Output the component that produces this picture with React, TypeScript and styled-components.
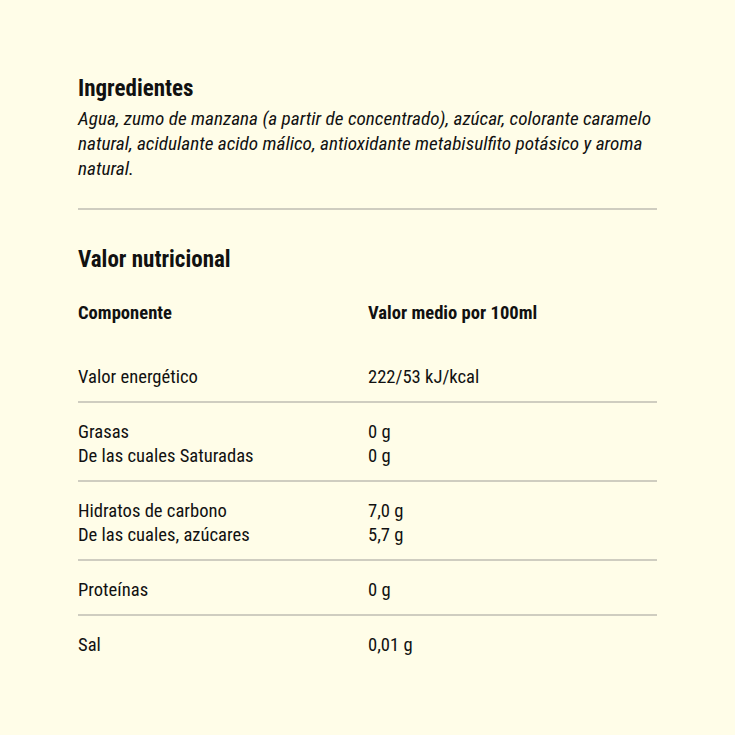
import React from 'react';
import styled, { createGlobalStyle } from 'styled-components';

const GlobalStyle = createGlobalStyle`
  html, body {
    margin: 0;
    padding: 0;
    background: #fffde8;
  }
  body {
    font-family: 'Roboto', 'Open Sans', sans-serif;
    font-stretch: 75%;
    color: #111;
  }
`;

const Page = styled.div`
  width: 735px;
  height: 735px;
  box-sizing: border-box;
  padding: 74px 78px 0 78px;
`;

const Title = styled.h2<{ $top?: number }>`
  margin: ${({ $top }) => $top || 0}px 0 0;
  font-size: 23px;
  line-height: 30px;
  font-weight: 700;
`;

const Ingredients = styled.p`
  margin: 2px 0 0;
  font-size: 19.2px;
  line-height: 25px;
  font-style: italic;
`;

const Divider = styled.hr`
  border: 0;
  border-top: 2px solid #cfcdc0;
  margin: 27px 0 0;
`;

const Table = styled.div`
  display: flex;
  flex-direction: column;
  margin-top: 14px;
`;

const Row = styled.div<{ $head?: boolean }>`
  display: grid;
  grid-template-columns: 290px 1fr;
  padding: ${({ $head }) => ($head ? '12px 0 23px' : '17px 0 12px')};
  border-bottom: ${({ $head }) => ($head ? 'none' : '2px solid #cfcdc0')};
  font-size: 18.6px;
  line-height: 24px;
  font-weight: ${({ $head }) => ($head ? 700 : 400)};

  &:last-child {
    border-bottom: none;
  }
`;

const Cell = styled.div`
  display: flex;
  flex-direction: column;
`;

type Item = { names: string[]; values: string[] };

const rows: Item[] = [
  { names: ['Valor energético'], values: ['222/53 kJ/kcal'] },
  { names: ['Grasas', 'De las cuales Saturadas'], values: ['0 g', '0 g'] },
  { names: ['Hidratos de carbono', 'De las cuales, azúcares'], values: ['7,0 g', '5,7 g'] },
  { names: ['Proteínas'], values: ['0 g'] },
  { names: ['Sal'], values: ['0,01 g'] },
];

export default function App() {
  return (
    <>
      <GlobalStyle />
      <Page>
        <Title>Ingredientes</Title>
        <Ingredients>
          Agua, zumo de manzana (a partir de concentrado), azúcar, colorante caramelo
          natural, acidulante acido málico, antioxidante metabisulfito potásico y aroma
          natural.
        </Ingredients>
        <Divider />
        <Title $top={35}>Valor nutricional</Title>
        <Table>
          <Row $head>
            <Cell>Componente</Cell>
            <Cell>Valor medio por 100ml</Cell>
          </Row>
          {rows.map((r) => (
            <Row key={r.names[0]}>
              <Cell>
                {r.names.map((n) => (
                  <span key={n}>{n}</span>
                ))}
              </Cell>
              <Cell>
                {r.values.map((v, i) => (
                  <span key={i}>{v}</span>
                ))}
              </Cell>
            </Row>
          ))}
        </Table>
      </Page>
    </>
  );
}
